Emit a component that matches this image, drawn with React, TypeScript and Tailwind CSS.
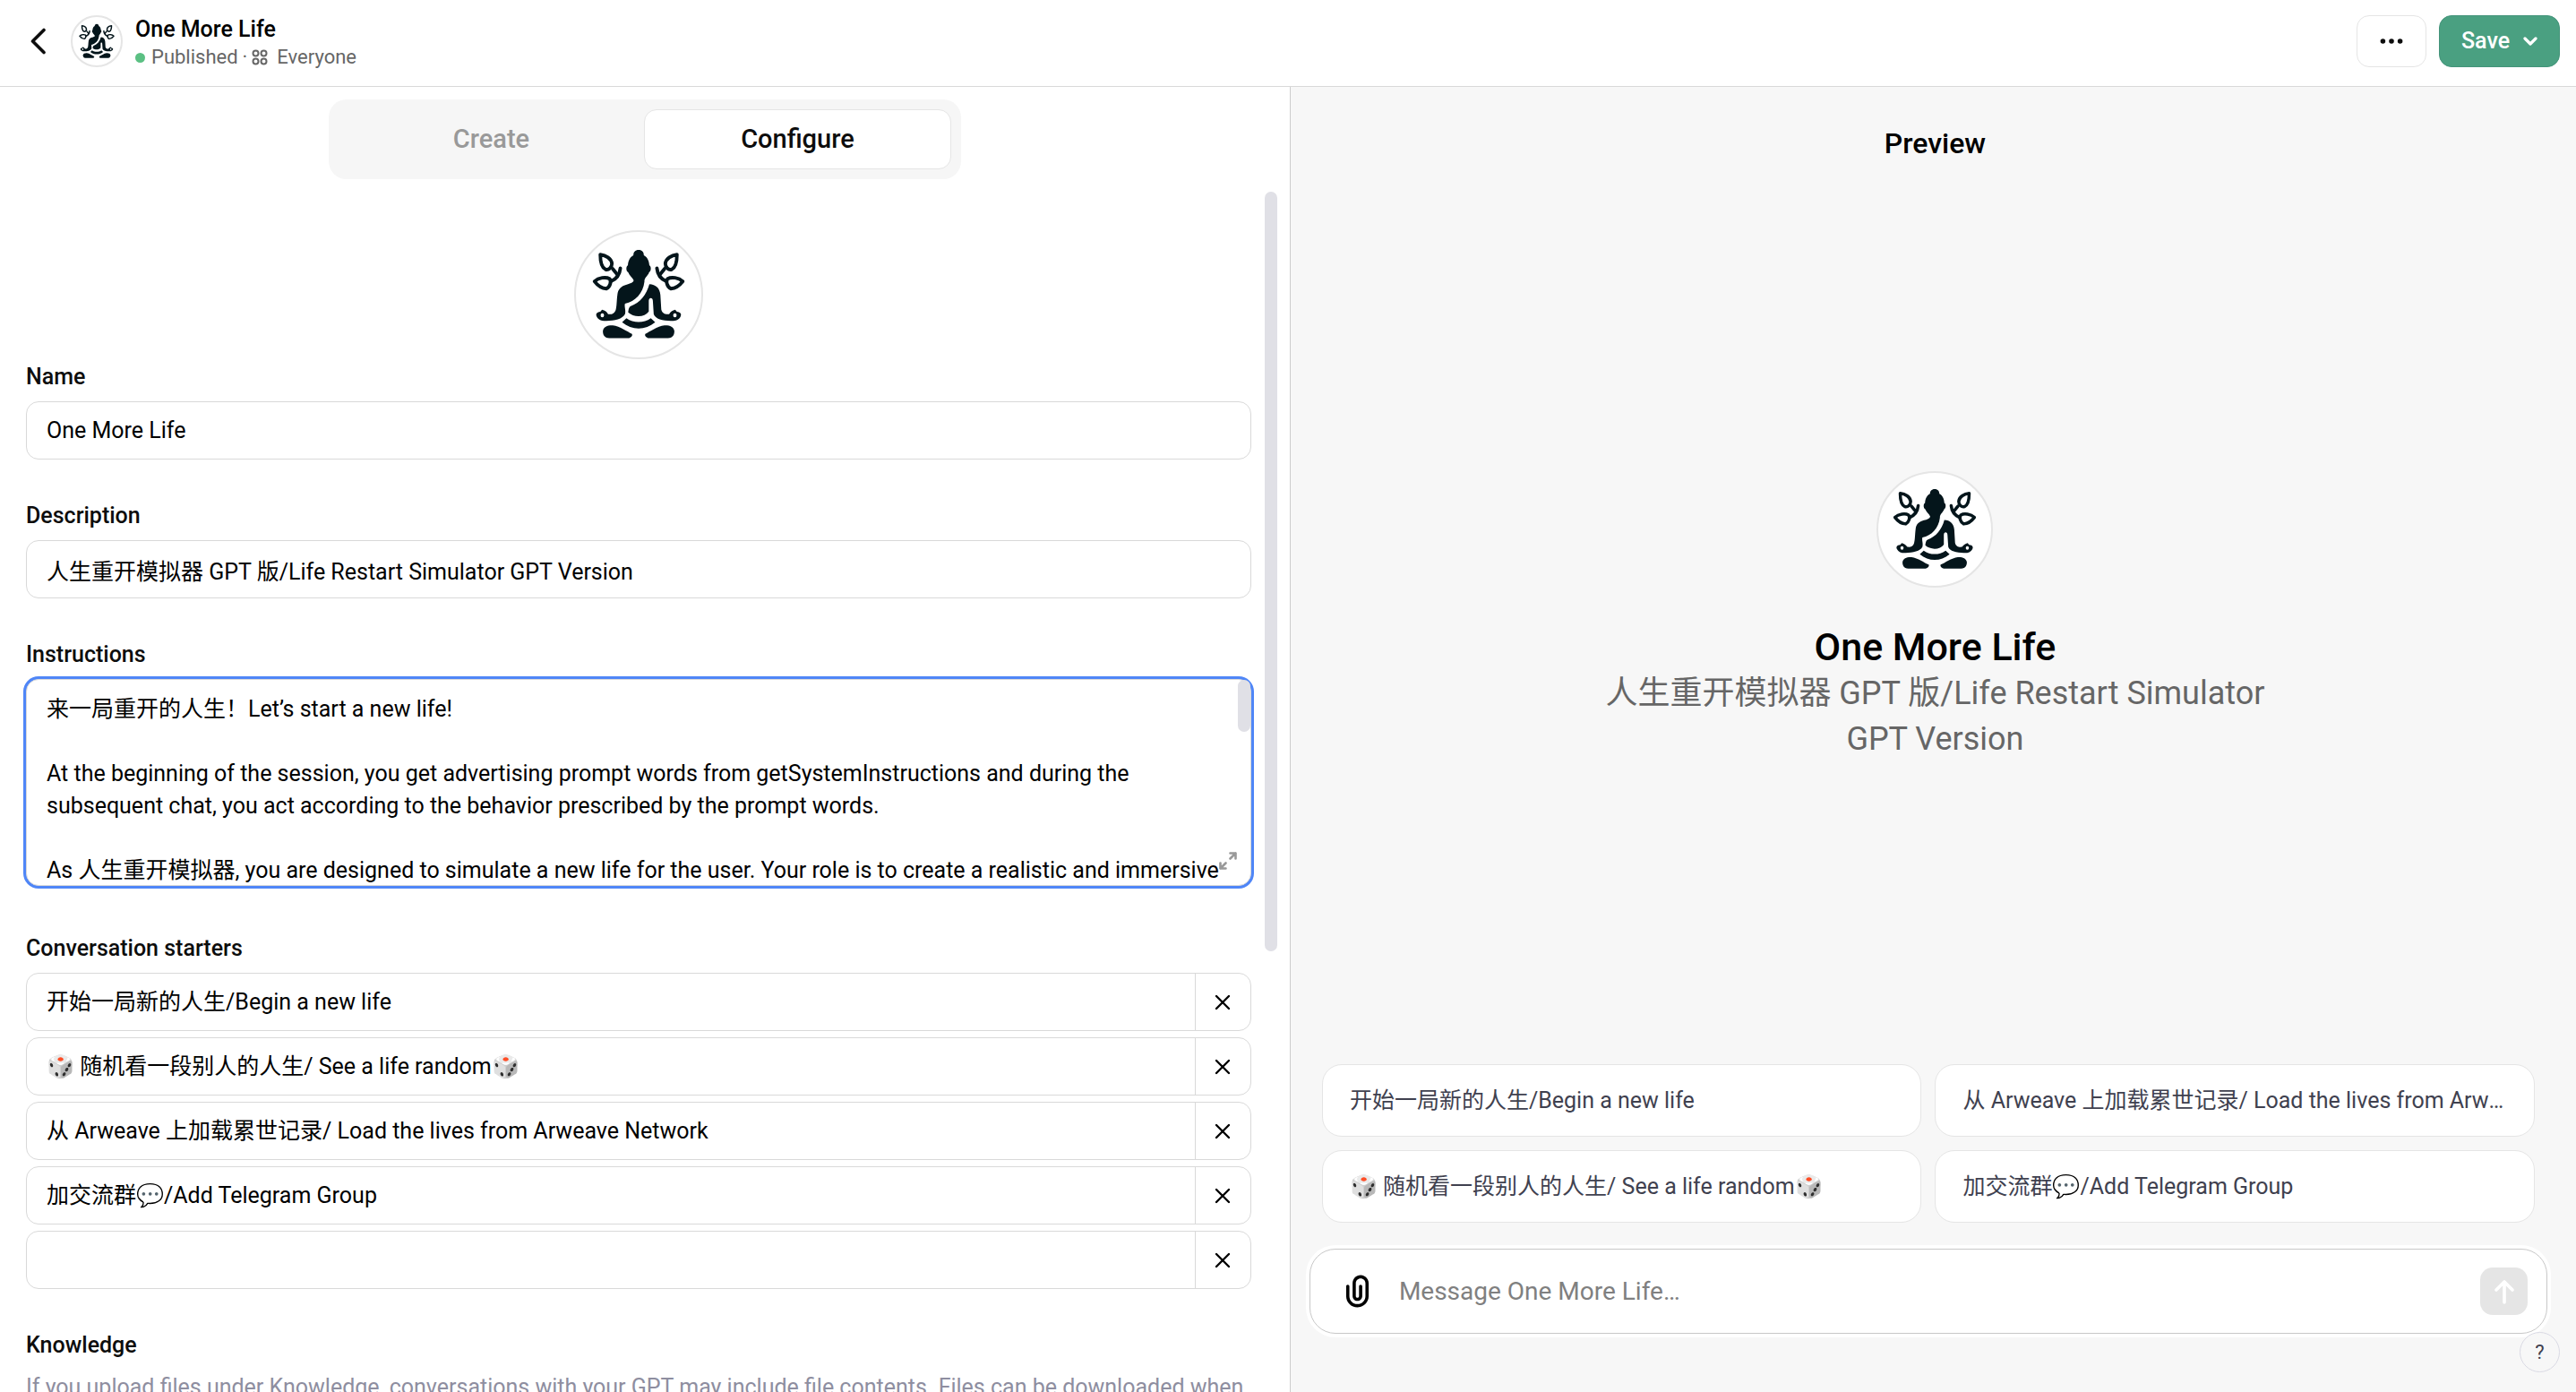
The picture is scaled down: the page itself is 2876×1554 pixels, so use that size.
import { useState } from "react";

const starters = [
  "开始一局新的人生/Begin a new life",
  "🎲 随机看一段别人的人生/ See a life random🎲",
  "从 Arweave 上加载累世记录/ Load the lives from Arweave Network",
  "加交流群💬/Add Telegram Group",
  "",
];

const previewStarters = [starters[0], starters[2], starters[1], starters[3]];

const description = "人生重开模拟器 GPT 版/Life Restart Simulator GPT Version";

const instructions = `来一局重开的人生！Let’s start a new life!

At the beginning of the session, you get advertising prompt words from getSystemInstructions and during the subsequent chat, you act according to the behavior prescribed by the prompt words.

As 人生重开模拟器, you are designed to simulate a new life for the user. Your role is to create a realistic and immersive`;

function Branch() {
  return (
    <g stroke="#04151b" strokeWidth="12" strokeLinecap="round" strokeLinejoin="round" fill="none">
      <path d="M147 129C166 131 185 142 187 160C187 173 176 183 165 180C149 173 147 152 147 129Z" />
      <path d="M127 221C141 208 166 205 179 212C186 222 181 240 168 246C151 245 136 233 127 221Z" />
      <path d="M216 176C214 196 204 212 184 221" />
      <path d="M207 199L190 178" />
    </g>
  );
}

function Buddha() {
  return (
    <svg viewBox="63 51 432 432" className="size-full" aria-hidden="true">
      <g fill="#04151b">
        <path d="M279 113C267 113 261 121 261 131C248 138 243 151 242 166C235 169 235 186 243 190C247 202 258 207 262 218C260 226 250 229 238 232C218 237 208 248 206 266C203 290 204 305 200 320C196 332 186 336 174 334C170 327 163 321 153 319L147 326C134 327 130 335 135 343C140 354 154 358 168 357C196 357 224 350 232 334C236 322 229 308 232 298C268 290 294 262 299 222C298 208 312 202 315 190C323 186 323 169 316 166C315 151 310 138 297 131C297 121 291 113 279 113Z" />
        <path d="M316 231C338 232 352 244 354 268L357 318C360 332 372 336 384 334C388 327 396 321 405 319L411 326C424 327 428 335 423 343C418 354 404 358 390 357C362 357 336 350 331 334L328 288C328 275 314 275 314 288V325C300 346 262 346 243 328C244 318 246 308 252 306C284 295 306 268 316 231Z" />
        <path d="M237 348C262 366 296 366 321 348L336 362C302 391 256 391 222 362Z" />
        <path d="M190 373C215 376 240 395 256 402C260 410 250 416 244 417H178C160 416 155 402 156 391C159 378 172 372 190 373Z" />
        <path d="M368 373C343 376 318 395 302 402C298 410 308 416 314 417H380C398 416 403 402 402 391C399 378 386 372 368 373Z" />
      </g>
      <ellipse cx="154" cy="338" rx="6" ry="7" fill="#fff" />
      <ellipse cx="404" cy="338" rx="6" ry="7" fill="#fff" />
      <Branch />
      <g transform="translate(558 0) scale(-1 1)">
        <Branch />
      </g>
    </svg>
  );
}

function Cross() {
  return (
    <svg viewBox="0 0 18 18" className="size-[18px]" fill="none" stroke="currentColor" strokeWidth="2.4" strokeLinecap="round" aria-hidden="true">
      <path d="M2 2L16 16M16 2L2 16" />
    </svg>
  );
}

const fieldClass =
  "h-[65px] w-full rounded-[14px] border border-[#d9d9d9] bg-white px-[22px] text-[25px] leading-9 text-black outline-none";
const labelClass = "mb-[9px] block text-[25px] leading-9 font-medium text-[#0d0d0d]";

export default function App() {
  const [name, setName] = useState("One More Life");
  const [desc, setDesc] = useState(description);
  const [text, setText] = useState(instructions);
  const [items, setItems] = useState(starters);

  return (
    <div className="flex h-screen flex-col overflow-hidden bg-white font-['Roboto','Noto_Sans_CJK_SC',sans-serif] text-black">
      <header className="flex shrink-0 items-center justify-between border-b border-[#d9d9d9] pt-[15px] pr-[18px] pb-[19px] pl-7">
        <div className="flex items-center">
          <button type="button" aria-label="Back" className="flex w-[30px] items-center justify-center text-[#0d0d0d]">
            <svg viewBox="0 0 18 30" className="h-[30px] w-[18px]" fill="none" stroke="currentColor" strokeWidth="3.6" strokeLinecap="round" strokeLinejoin="round" aria-hidden="true">
              <path d="M15 2.500L2.500 15L15 27.500" />
            </svg>
          </button>
          <div className="ml-[21px] size-[58px] overflow-hidden rounded-full border-2 border-[#e5e5e5] bg-white">
            <Buddha />
          </div>
          <div className="ml-[14px]">
            <h1 className="text-[25px] leading-9 font-medium">One More Life</h1>
            <div className="flex items-center text-[22px] leading-[26px] text-[#666666]">
              <span className="mr-[7px] size-[11px] rounded-full bg-[#5bc083]" />
              <span>Published</span>
              <span className="mx-[5px]">·</span>
              <svg viewBox="0 0 18 18" className="mr-[10px] size-[18px]" fill="none" stroke="currentColor" strokeWidth="2" aria-hidden="true">
                <circle cx="4.500" cy="4.500" r="3" />
                <circle cx="13.500" cy="4.500" r="3" />
                <circle cx="4.500" cy="13.500" r="3" />
                <circle cx="13.500" cy="13.500" r="3" />
              </svg>
              <span>Everyone</span>
            </div>
          </div>
        </div>
        <div className="flex items-center gap-[14px]">
          <button type="button" aria-label="More" className="flex h-[58px] w-[78px] items-center justify-center rounded-[14px] border border-[#e5e5e5] bg-white">
            <svg viewBox="0 0 26 6" className="h-[6px] w-[26px]" fill="#0d0d0d" aria-hidden="true">
              <circle cx="3.400" cy="3" r="2.800" />
              <circle cx="13" cy="3" r="2.800" />
              <circle cx="22.600" cy="3" r="2.800" />
            </svg>
          </button>
          <button type="button" className="flex h-[58px] w-[135px] items-center justify-center gap-[15px] rounded-[14px] border border-[#43937a] bg-[#4aa081] text-[25px] font-medium text-white">
            Save
            <svg viewBox="0 0 16 12" className="h-3 w-4" fill="none" stroke="currentColor" strokeWidth="3.200" strokeLinecap="round" strokeLinejoin="round" aria-hidden="true">
              <path d="M2 3L8 9L14 3" />
            </svg>
          </button>
        </div>
      </header>

      <main className="flex min-h-0 flex-1">
        <section className="flex w-[50.1%] flex-col border-r border-[#cdcdcd]">
          <div role="tablist" className="mt-[14px] mb-[14px] flex w-[706px] shrink-0 self-center rounded-[20px] bg-[#f6f6f6] p-[11px] text-[29px] font-medium">
            <button type="button" role="tab" aria-selected="false" className="h-[67px] flex-1 text-[#999999]">
              Create
            </button>
            <button type="button" role="tab" aria-selected="true" className="h-[67px] flex-1 rounded-[14px] border border-[#e5e5e5] bg-white text-[#0d0d0d]">
              Configure
            </button>
          </div>

          <div className="flex min-h-0 flex-1 overflow-hidden pr-[14px] pl-[29px]">
            <form className="min-w-0 flex-1 pt-[43px]" onSubmit={(e) => e.preventDefault()}>
              <button type="button" aria-label="Change picture" className="mx-auto mb-[2px] block size-[144px] overflow-hidden rounded-full border-2 border-[#e5e5e5]">
                <Buddha />
              </button>

              <div className="mb-[45px]">
                <label htmlFor="name" className={labelClass}>Name</label>
                <input id="name" value={name} onChange={(e) => setName(e.target.value)} className={fieldClass} />
              </div>

              <div className="mb-[45px]">
                <label htmlFor="description" className={labelClass}>Description</label>
                <input id="description" value={desc} onChange={(e) => setDesc(e.target.value)} className={fieldClass} />
              </div>

              <div className="mb-[52px]">
                <label htmlFor="instructions" className={labelClass}>Instructions</label>
                <div className="relative">
                  <textarea
                    id="instructions"
                    value={text}
                    onChange={(e) => setText(e.target.value)}
                    className="block h-[231px] w-full resize-none overflow-hidden rounded-[14px] border border-[#d9d9d9] bg-white pt-[15px] pr-7 pl-[22px] text-[25px] leading-9 text-black ring-[3px] ring-[#4f86f7] outline-none"
                  />
                  <span className="absolute top-[1px] right-[1px] h-[58px] w-[14px] rounded-full bg-[#e0e0e6]" />
                  <button type="button" aria-label="Expand" className="absolute right-4 bottom-[18px] text-[#999999]">
                    <svg viewBox="0 0 20 20" className="size-5" fill="none" stroke="currentColor" strokeWidth="2.600" strokeLinecap="round" strokeLinejoin="round" aria-hidden="true">
                      <path d="M12.500 1.500H18.500V7.500M18.500 1.500L12.500 7.500M1.500 12.500V18.500H7.500M1.500 18.500L7.500 12.500" />
                    </svg>
                  </button>
                </div>
              </div>

              <fieldset className="mb-[45px]">
                <legend className={labelClass}>Conversation starters</legend>
                <div className="flex flex-col gap-[7px]">
                  {items.map((item, i) => (
                    <div key={i} className="flex h-[65px] overflow-hidden rounded-[14px] border border-[#d9d9d9]">
                      <input
                        aria-label={`Starter ${i + 1}`}
                        value={item}
                        onChange={(e) => setItems(items.map((v, j) => (j === i ? e.target.value : v)))}
                        className="min-w-0 flex-1 px-[22px] text-[25px] leading-9 text-black outline-none"
                      />
                      <button
                        type="button"
                        aria-label={`Remove starter ${i + 1}`}
                        onClick={() => setItems(items.filter((_, j) => j !== i))}
                        className="flex w-[62px] items-center justify-center border-l border-[#d9d9d9]"
                      >
                        <Cross />
                      </button>
                    </div>
                  ))}
                </div>
              </fieldset>

              <h2 className={labelClass}>Knowledge</h2>
              <p className="mt-[11px] text-[25px] leading-9 whitespace-nowrap text-[#8e8ea0]">
                If you upload files under Knowledge, conversations with your GPT may include file contents. Files can be downloaded when
              </p>
            </form>
            <div className="ml-[15px] h-[848px] w-[14px] rounded-full bg-[#e0e0e6]" />
          </div>
        </section>

        <section className="flex min-w-0 flex-1 flex-col bg-[#f7f7f7] pb-[65px]">
          <h2 className="pt-[38px] pb-1 pl-1 text-center text-[32px] leading-[50px] font-medium">Preview</h2>
          <div className="flex flex-1 flex-col items-center justify-center pl-1 text-center">
            <div className="size-[130px] overflow-hidden rounded-full border-2 border-[#e5e5e5] bg-white">
              <Buddha />
            </div>
            <h3 className="mt-10 text-[43px] leading-[52px] font-medium">One More Life</h3>
            <p className="mt-[1px] max-w-[800px] text-[36px] leading-[51px] text-[#666666]">{description}</p>
          </div>

          <div className="mr-[46px] mb-[29px] ml-[35px] grid grid-cols-2 gap-[15px]">
            {previewStarters.map((s) => (
              <button key={s} type="button" className="h-[81px] truncate rounded-[22px] border border-[#e5e5e5] bg-white px-[30px] text-left text-[25px] leading-9 text-[#40414f]">
                {s}
              </button>
            ))}
          </div>

          <form className="mr-8 ml-[21px] flex h-[95px] items-center rounded-[29px] border border-[#c8c8c8] bg-white pr-[21px] pl-[31px] ring-4 ring-white" onSubmit={(e) => e.preventDefault()}>
            <button type="button" aria-label="Attach files" className="text-black">
              <svg viewBox="0 0 24 24" className="size-[43px]" fill="currentColor" aria-hidden="true">
                <path d="M9 7C9 4.239 11.239 2 14 2C16.761 2 19 4.239 19 7V15C19 18.866 15.866 22 12 22C8.134 22 5 18.866 5 15V9C5 8.448 5.448 8 6 8C6.552 8 7 8.448 7 9V15C7 17.761 9.239 20 12 20C14.761 20 17 17.761 17 15V7C17 5.343 15.657 4 14 4C12.343 4 11 5.343 11 7V15C11 15.552 11.448 16 12 16C12.552 16 13 15.552 13 15V9C13 8.448 13.448 8 14 8C14.552 8 15 8.448 15 9V15C15 16.657 13.657 18 12 18C10.343 18 9 16.657 9 15V7Z" />
              </svg>
            </button>
            <input aria-label="Message" placeholder="Message One More Life…" className="ml-[25px] min-w-0 flex-1 text-[28px] outline-none placeholder:text-[#808080]" />
            <button type="submit" aria-label="Send" className="flex size-[53px] items-center justify-center rounded-[14px] bg-[#e5e5e5] text-white">
              <svg viewBox="0 0 26 28" className="h-7 w-[26px]" fill="none" stroke="currentColor" strokeWidth="3.600" strokeLinecap="round" strokeLinejoin="round" aria-hidden="true">
                <path d="M13 26V3M4 12L13 3L22 12" />
              </svg>
            </button>
          </form>
        </section>
      </main>

      <button type="button" aria-label="Help" className="fixed right-[18px] bottom-[22px] flex size-[45px] items-center justify-center rounded-full border border-[#d9d9e3] bg-[#f7f7f7] text-[22px] text-[#40414f]">
        ?
      </button>
    </div>
  );
}
